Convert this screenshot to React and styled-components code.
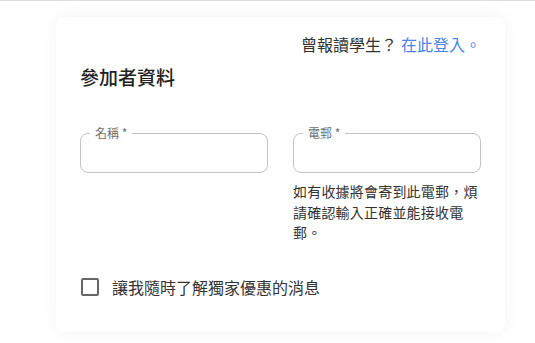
import React from 'react';
import styled, { createGlobalStyle } from 'styled-components';

const GlobalStyle = createGlobalStyle`
  html, body {
    margin: 0;
    padding: 0;
    background: #ffffff;
  }
  body {
    font-family: "Noto Sans CJK TC", "Noto Sans", Roboto, sans-serif;
    color: #333333;
  }
`;

const Page = styled.div`
  border-top: 1px solid #dedede;
  padding: 16px 0 0 56px;
  min-height: 342px;
  box-sizing: border-box;
`;

const Card = styled.div`
  width: 449px;
  height: 315px;
  box-sizing: border-box;
  background: #ffffff;
  border-radius: 8px;
  box-shadow: 0 0 18px rgba(0, 0, 0, 0.05);
  padding: 16px 24px 0 24px;
  display: flex;
  flex-direction: column;
`;

const LoginLine = styled.div`
  align-self: flex-end;
  font-size: 16px;
  line-height: 22px;
  color: #333333;
  margin-right: 0;
`;

const LoginLink = styled.a`
  color: #4a84e6;
  text-decoration: none;
  margin-left: 4px;
`;

const Title = styled.h2`
  margin: 8px 0 0 0;
  font-size: 19px;
  line-height: 28px;
  font-weight: 500;
  color: #222222;
`;

const Fields = styled.div`
  display: grid;
  grid-template-columns: 188px 188px;
  column-gap: 25px;
  margin-top: 36px;
`;

const FieldColumn = styled.div`
  display: flex;
  flex-direction: column;
`;

const Outline = styled.fieldset`
  margin: 0;
  padding: 0;
  min-width: 0;
  border: 1px solid #c4c4c4;
  border-radius: 8px;
  height: 46px;
  box-sizing: border-box;
`;

const Legend = styled.legend`
  margin-left: 9px;
  padding: 0 5px;
  font-size: 12px;
  line-height: 12px;
  color: #6f6f6f;
`;

const Input = styled.input`
  display: block;
  width: 100%;
  height: 32px;
  border: none;
  outline: none;
  background: transparent;
  box-sizing: border-box;
  padding: 0 14px;
  font: inherit;
`;

const Helper = styled.p`
  margin: 8px 0 0 0;
  font-size: 14px;
  line-height: 20.5px;
  color: #333333;
  letter-spacing: 0.2px;
`;

const CheckRow = styled.label`
  display: flex;
  align-items: center;
  gap: 13px;
  margin-top: 33px;
  margin-left: 1px;
  font-size: 16px;
  line-height: 22px;
  color: #333333;
`;

const Box = styled.span`
  width: 18px;
  height: 18px;
  box-sizing: border-box;
  border: 2px solid #666666;
  border-radius: 2px;
`;

const Field = ({ label, helper }) => (
  <FieldColumn>
    <Outline>
      <Legend>{label} *</Legend>
      <Input />
    </Outline>
    {helper && <Helper>{helper}</Helper>}
  </FieldColumn>
);

const App = () => {
  return (
    <>
      <GlobalStyle />
      <Page>
        <Card>
          <LoginLine>
            曾報讀學生？<LoginLink href="#">在此登入。</LoginLink>
          </LoginLine>
          <Title>參加者資料</Title>
          <Fields>
            <Field label="名稱" />
            <Field
              label="電郵"
              helper="如有收據將會寄到此電郵，煩請確認輸入正確並能接收電郵。"
            />
          </Fields>
          <CheckRow>
            <Box />
            讓我隨時了解獨家優惠的消息
          </CheckRow>
        </Card>
      </Page>
    </>
  );
};

export default App;
